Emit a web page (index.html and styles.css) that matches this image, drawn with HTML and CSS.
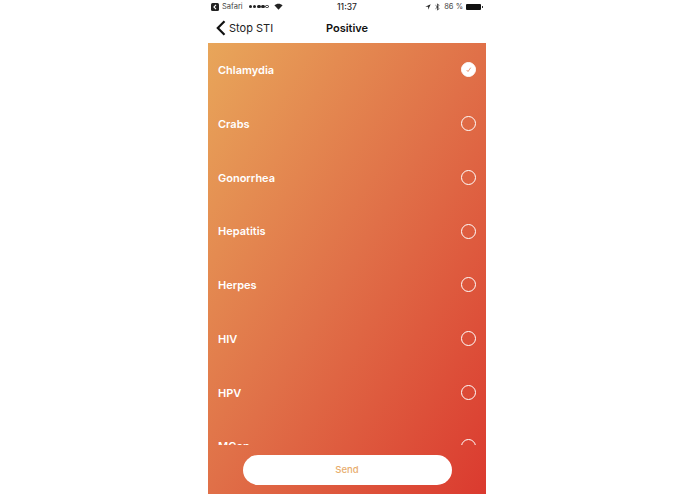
FILE: index.html
```html
<!DOCTYPE html>
<html lang="en">
<head>
<meta charset="utf-8">
<title>Positive</title>
<link rel="stylesheet" href="styles.css">
</head>
<body>
<div class="phone">
  <div class="status">
    <div class="status-side">
      <svg class="back-app" viewBox="0 0 8 8"><rect width="8" height="8" rx="1.5" fill="#222"/><path d="M5 1.8 2.9 4 5 6.2" fill="none" stroke="#fff" stroke-width="1.1"/></svg>
      <span>Safari</span>
      <span class="dots"><i></i><i></i><i></i><i></i><i class="off"></i></span>
      <svg class="wifi" viewBox="0 0 10 8"><path d="M5 7.6 .3 2.6C3 .2 7 .2 9.7 2.6Z" fill="#222"/></svg>
    </div>
    <div class="clock">11:37</div>
    <div class="status-side right">
      <svg class="loc" viewBox="0 0 8 8"><path d="M7.6.4 .4 3.8h3.8v3.8Z" fill="#222"/></svg>
      <svg class="bt" viewBox="0 0 6 10"><path d="M.5 2.8 5 6.9 3 9V1l2 2.1L.5 7.2" fill="none" stroke="#222" stroke-width=".9"/></svg>
      <span>86 %</span>
      <span class="battery"></span>
    </div>
  </div>
  <div class="nav">
    <div class="nav-back">
      <svg class="chev" viewBox="0 0 10 16"><path d="M8.5 1.2 1.8 8l6.7 6.8" fill="none" stroke="#111" stroke-width="2.2"/></svg>
      <span>Stop STI</span>
    </div>
    <div class="nav-title">Positive</div>
  </div>
  <div class="content">
    <ul class="list">
      <li class="row"><span>Chlamydia</span><span class="radio on"><svg viewBox="0 0 16 16"><path d="M5.6 8.4 7.2 10.2 10.4 5.6" fill="none" stroke="#e0764a" stroke-width=".9"/></svg></span></li>
      <li class="row"><span>Crabs</span><span class="radio"></span></li>
      <li class="row"><span>Gonorrhea</span><span class="radio"></span></li>
      <li class="row"><span>Hepatitis</span><span class="radio"></span></li>
      <li class="row"><span>Herpes</span><span class="radio"></span></li>
      <li class="row"><span>HIV</span><span class="radio"></span></li>
      <li class="row"><span>HPV</span><span class="radio"></span></li>
      <li class="row"><span>MGen</span><span class="radio"></span></li>
    </ul>
    <div class="footer"><button class="send">Send</button></div>
  </div>
</div>
</body>
</html>
```
FILE: styles.css
```css
* { box-sizing: border-box; }
html, body { margin: 0; height: 100%; background: #fff; }
body { display: flex; padding-left: 208px; font-family: Inter, "Liberation Sans", Arial, sans-serif; overflow: hidden; }
.phone { width: 278px; height: 494px; display: flex; flex-direction: column; }
.status { height: 13px; display: flex; justify-content: space-between; align-items: center; position: relative; padding: 0 3px; font-size: 7.5px; color: #444; }
.status-side { display: flex; align-items: center; gap: 3px; }
.back-app { width: 8px; height: 8px; }
.dots { display: flex; gap: .6px; margin-left: 3px; }
.dots i { width: 3.6px; height: 3.6px; border-radius: 50%; background: #222; }
.dots i.off { background: none; border: .6px solid #222; }
.wifi { width: 9px; height: 7px; margin-left: 2px; }
.clock { position: absolute; left: 0; right: 0; text-align: center; font-size: 8.5px; font-weight: 500; color: #222; }
.right { gap: 4px; }
.loc { width: 6px; height: 6px; }
.bt { width: 5px; height: 8px; }
.battery { width: 15px; height: 6px; background: #111; border-radius: 1px; margin-left: -1px; margin-right: 2px; position: relative; }
.battery::after { content: ""; position: absolute; right: -2px; top: 2px; width: 1px; height: 2px; background: #333; }
.nav { height: 30px; display: flex; align-items: center; position: relative; padding-left: 8px; }
.nav-back { display: flex; align-items: center; gap: 3px; font-size: 11px; color: #222; }
.chev { width: 10px; height: 16px; }
.nav-title { position: absolute; left: 0; right: 0; text-align: center; font-size: 11px; font-weight: 600; color: #111; }
.content { flex: 1; display: flex; flex-direction: column; background: linear-gradient(122deg, #e8a65a 0%, #e07048 50%, #db3a2f 100%); min-height: 0; }
.list { list-style: none; margin: 0; padding: 0; height: 402px; overflow: hidden; flex: none; }
.row { height: 53.75px; display: flex; justify-content: space-between; align-items: center; padding: .5px 10px 0; color: #fff; font-size: 11px; font-weight: 600; }
.radio { width: 15px; height: 15px; border: .8px solid #fff; border-radius: 50%; flex: none; margin-top: -.5px; }
.radio.on { background: #fff; }
.radio svg { display: block; width: 13.4px; height: 13.4px; }
.footer { flex: 1; display: flex; justify-content: center; padding-top: 10px; }
.send { width: 209px; height: 29.5px; border: 0; border-radius: 15px; background: #fff; color: #e8ad6e; font: 500 9.5px Inter, "Liberation Sans", Arial, sans-serif; padding-bottom: 2px; }
```
